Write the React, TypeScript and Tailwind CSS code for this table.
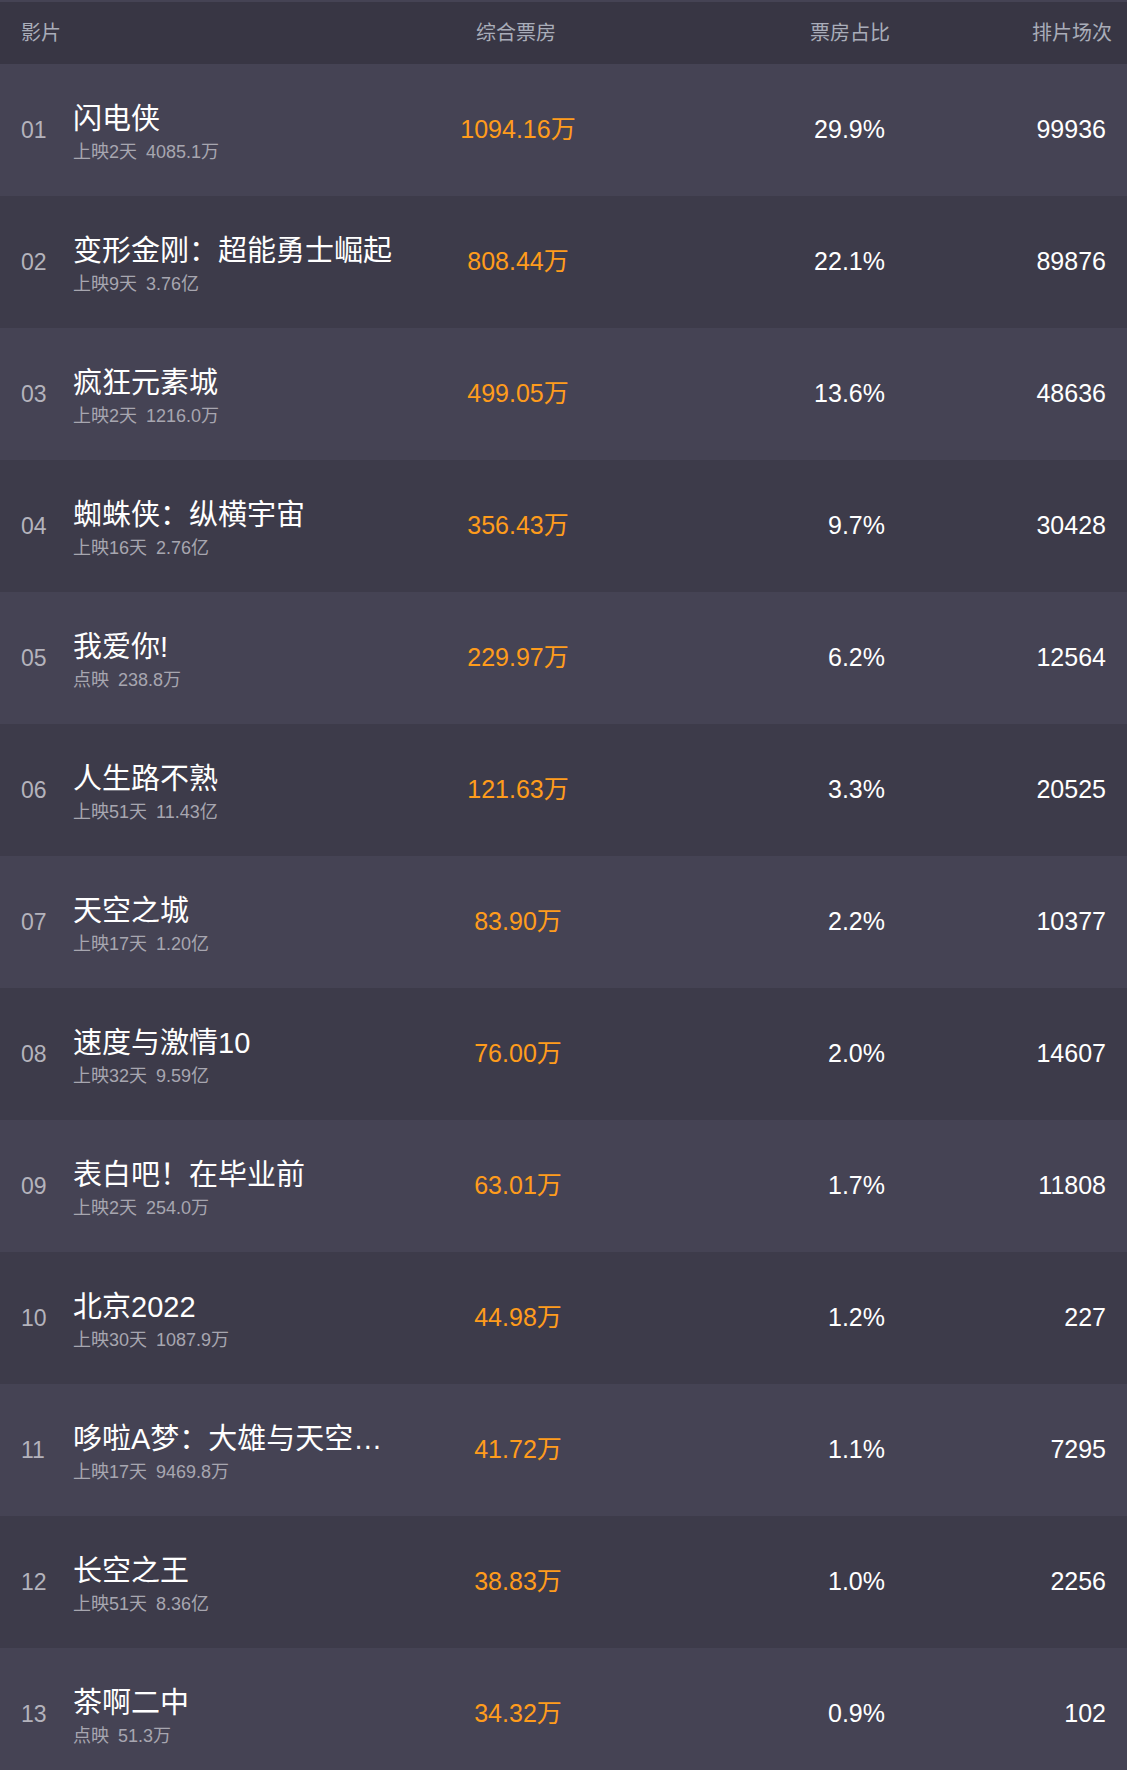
const font = {
  fontFamily: '"Liberation Sans", Arial, "Noto Sans CJK SC", sans-serif',
};

interface Movie {
  rank: string;
  name: string;
  release: string;
  sum: string;
  box: string;
  rate: string;
  shows: string;
}

const movies: Movie[] = [
  { rank: "01", name: "闪电侠", release: "上映2天", sum: "4085.1万", box: "1094.16万", rate: "29.9%", shows: "99936" },
  { rank: "02", name: "变形金刚：超能勇士崛起", release: "上映9天", sum: "3.76亿", box: "808.44万", rate: "22.1%", shows: "89876" },
  { rank: "03", name: "疯狂元素城", release: "上映2天", sum: "1216.0万", box: "499.05万", rate: "13.6%", shows: "48636" },
  { rank: "04", name: "蜘蛛侠：纵横宇宙", release: "上映16天", sum: "2.76亿", box: "356.43万", rate: "9.7%", shows: "30428" },
  { rank: "05", name: "我爱你!", release: "点映", sum: "238.8万", box: "229.97万", rate: "6.2%", shows: "12564" },
  { rank: "06", name: "人生路不熟", release: "上映51天", sum: "11.43亿", box: "121.63万", rate: "3.3%", shows: "20525" },
  { rank: "07", name: "天空之城", release: "上映17天", sum: "1.20亿", box: "83.90万", rate: "2.2%", shows: "10377" },
  { rank: "08", name: "速度与激情10", release: "上映32天", sum: "9.59亿", box: "76.00万", rate: "2.0%", shows: "14607" },
  { rank: "09", name: "表白吧！在毕业前", release: "上映2天", sum: "254.0万", box: "63.01万", rate: "1.7%", shows: "11808" },
  { rank: "10", name: "北京2022", release: "上映30天", sum: "1087.9万", box: "44.98万", rate: "1.2%", shows: "227" },
  { rank: "11", name: "哆啦A梦：大雄与天空的理想乡", release: "上映17天", sum: "9469.8万", box: "41.72万", rate: "1.1%", shows: "7295" },
  { rank: "12", name: "长空之王", release: "上映51天", sum: "8.36亿", box: "38.83万", rate: "1.0%", shows: "2256" },
  { rank: "13", name: "茶啊二中", release: "点映", sum: "51.3万", box: "34.32万", rate: "0.9%", shows: "102" },
];

function Row({ movie, index }: { movie: Movie; index: number }) {
  const bg = index % 2 === 0 ? "bg-[#454354]" : "bg-[#3d3b4a]";
  return (
    <div className={`flex items-center h-[132px] pr-[21px] ${bg}`}>
      <div className="w-[73px] shrink-0 pl-[21px] text-[23px] text-[#b4b3bc]">
        {movie.rank}
      </div>
      <div className="w-[325px] shrink-0 flex flex-col pt-[4px]">
        <div className="text-[29px] leading-[36px] text-white whitespace-nowrap overflow-hidden text-ellipsis">
          {movie.name}
        </div>
        <div className="text-[18px] leading-[24px] mt-[3px] text-[#a7a6b0] whitespace-nowrap">
          {movie.release}
          <span className="ml-[9px]">{movie.sum}</span>
        </div>
      </div>
      <div className="w-[240px] shrink-0 text-center text-[25px] text-[#ff9c1c]">
        {movie.box}
      </div>
      <div className="w-[247px] shrink-0 text-right text-[25px] text-white">
        {movie.rate}
      </div>
      <div className="flex-1 text-right text-[25px] text-white">
        {movie.shows}
      </div>
    </div>
  );
}

export default function App() {
  return (
    <div className="w-[1127px] bg-[#3d3b4a]" style={font}>
      <div className="h-[2px] bg-[#454354]"></div>
      <div className="flex items-center h-[62px] pr-[15px] bg-[#383644] text-[20px] text-[#a9adb9]">
        <div className="w-[398px] shrink-0 pl-[21px]">影片</div>
        <div className="w-[236px] shrink-0 text-center">综合票房</div>
        <div className="w-[256px] shrink-0 text-right">票房占比</div>
        <div className="flex-1 text-right">排片场次</div>
      </div>
      {movies.map((movie, index) => (
        <Row key={movie.rank} movie={movie} index={index} />
      ))}
    </div>
  );
}
